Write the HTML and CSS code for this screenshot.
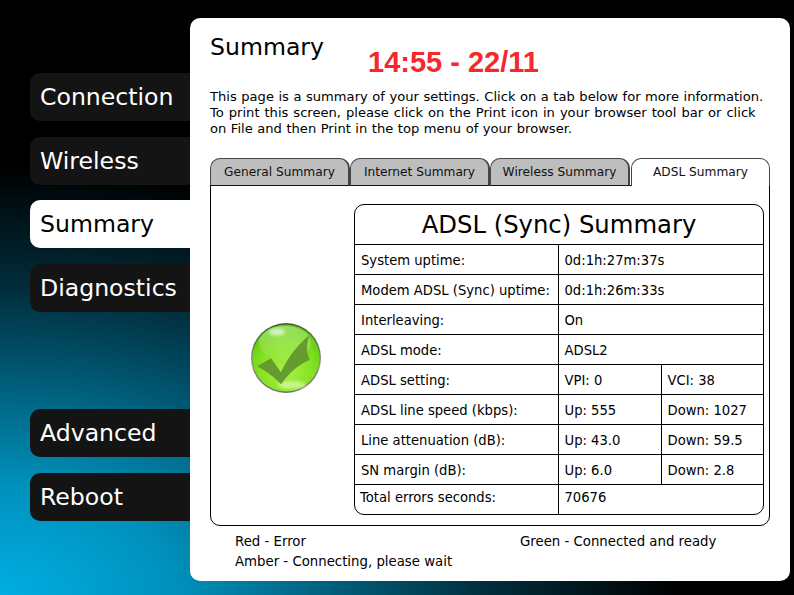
FILE: index.html
```html
<!DOCTYPE html>
<html lang="en">
<head>
<meta charset="utf-8">
<title>Summary</title>
<link rel="stylesheet" href="styles.css">
</head>
<body>
<div class="page">
  <nav class="nav">
    <div class="nav-group">
      <a class="nav-item">Connection</a>
      <a class="nav-item">Wireless</a>
      <a class="nav-item active">Summary</a>
      <a class="nav-item">Diagnostics</a>
    </div>
    <div class="nav-group">
      <a class="nav-item">Advanced</a>
      <a class="nav-item">Reboot</a>
    </div>
  </nav>
  <main class="panel">
    <div class="head">
      <h1 class="title">Summary</h1>
      <div class="clock">14:55 - 22/11</div>
    </div>
    <p class="intro"><span class="line">This page is a summary of your settings. Click on a tab below for more information.</span><span class="line wide">To print this screen, please click on the Print icon in your browser tool bar or click</span><span class="line">on File and then Print in the top menu of your browser.</span></p>
    <div class="tabs">
      <div class="tab">General Summary</div>
      <div class="tab">Internet Summary</div>
      <div class="tab">Wireless Summary</div>
      <div class="tab current">ADSL Summary</div>
    </div>
    <section class="tabbody">
      <div class="status">
        <svg class="check" width="72" height="72" viewBox="0 0 72 72" aria-hidden="true">
          <defs>
            <radialGradient id="ball" cx="50%" cy="70%" r="65%">
              <stop offset="0" stop-color="#a8f04a"/>
              <stop offset="0.6" stop-color="#86e222"/>
              <stop offset="1" stop-color="#62cc10"/>
            </radialGradient>
            <linearGradient id="rim" x1="0" y1="0" x2="0" y2="1">
              <stop offset="0" stop-color="#3c5a30"/>
              <stop offset="0.6" stop-color="#8a9a80"/>
              <stop offset="1" stop-color="#6a6a62"/>
            </linearGradient>
            <linearGradient id="gloss" x1="0" y1="0" x2="0" y2="1">
              <stop offset="0" stop-color="#fff" stop-opacity="0.35"/>
              <stop offset="1" stop-color="#fff" stop-opacity="0.05"/>
            </linearGradient>
            <filter id="soft" x="-30%" y="-30%" width="160%" height="160%">
              <feGaussianBlur stdDeviation="1.4"/>
            </filter>
          </defs>
          <circle cx="36" cy="36" r="35" fill="url(#rim)"/>
          <circle cx="36" cy="36" r="33.6" fill="url(#ball)"/>
          <ellipse cx="35" cy="21" rx="26" ry="17" fill="url(#gloss)"/>
          <ellipse cx="27" cy="10" rx="8" ry="3.6" fill="#fff" opacity="0.6" filter="url(#soft)"/>
          <ellipse cx="42" cy="63" rx="14" ry="4" fill="#dcfcaa" opacity="0.7" filter="url(#soft)"/>
          <path d="M7.7 44.3 L21 36.7 L31 51 C38 36 47 24 58.7 14.3 C56 22 55.5 30 59.3 37.7 C48 42 38 52 31 61.7 C25 55 15 48 7.7 44.3 Z" fill="#659c30" stroke="#588c28" stroke-width="0.6"/>
        </svg>
      </div>
      <div class="sync">
        <table class="grid">
          <colgroup><col class="c1"><col class="c2"><col class="c3"></colgroup>
          <tr><th colspan="3">ADSL (Sync) Summary</th></tr>
          <tr><td>System uptime:</td><td colspan="2">0d:1h:27m:37s</td></tr>
          <tr><td>Modem ADSL (Sync) uptime:</td><td colspan="2">0d:1h:26m:33s</td></tr>
          <tr><td>Interleaving:</td><td colspan="2">On</td></tr>
          <tr><td>ADSL mode:</td><td colspan="2">ADSL2</td></tr>
          <tr><td>ADSL setting:</td><td>VPI: 0</td><td>VCI: 38</td></tr>
          <tr><td>ADSL line speed (kbps):</td><td>Up: 555</td><td>Down: 1027</td></tr>
          <tr><td>Line attenuation (dB):</td><td>Up: 43.0</td><td>Down: 59.5</td></tr>
          <tr><td>SN margin (dB):</td><td>Up: 6.0</td><td>Down: 2.8</td></tr>
          <tr class="total"><td>Total errors seconds:</td><td colspan="2">70676</td></tr>
        </table>
      </div>
    </section>
    <div class="legend">
      <span>Red - Error</span>
      <span>Green - Connected and ready</span>
      <span>Amber - Connecting, please wait</span>
    </div>
  </main>
</div>
</body>
</html>
```
FILE: styles.css
```css
* { box-sizing: border-box; }
html, body { margin: 0; height: 100%; }
body {
  width: 794px;
  height: 595px;
  overflow: hidden;
  font-family: "DejaVu Sans", Verdana, sans-serif;
  color: #000;
  background: radial-gradient(ellipse 680px 430px at 0 100%, #00aee2 0%, #0092be 25%, #005c78 50%, #012c3a 72%, #000 100%);
}
.page {
  display: flex;
  align-items: flex-start;
  padding: 18px 4px 0 30px;
  height: 100%;
}
.nav {
  width: 160px;
  padding-top: 55px;
  display: flex;
  flex-direction: column;
  gap: 97.5px;
}
.nav-group {
  display: flex;
  flex-direction: column;
  gap: 15.5px;
}
.nav-item {
  display: flex;
  align-items: center;
  height: 48px;
  padding-left: 10px;
  background: #141414;
  color: #fff;
  font-size: 23.6px;
  border-radius: 10px 0 0 10px;
}
.nav-item.active { background: #fff; color: #000; }
.panel {
  width: 600px;
  height: 563px;
  background: #fff;
  border-radius: 10px;
  padding: 0 20px;
}
.head {
  display: flex;
  height: 65px;
}
.title {
  margin: 14px 0 0;
  width: 158px;
  font-size: 23.6px;
  font-weight: 400;
  line-height: 30px;
}
.clock {
  margin-top: 27px;
  font-family: "Liberation Sans", Arial, sans-serif;
  font-weight: 700;
  font-size: 29px;
  line-height: 34px;
  color: #f5282d;
}
.intro {
  margin: 6px 0 0;
  height: 69px;
  font-size: 13.1px;
  line-height: 16px;
  word-spacing: 0.35px;
}
.line { display: block; white-space: nowrap; }
.line.wide { word-spacing: 0.8px; }
.tabs {
  display: flex;
  height: 28px;
}
.tab {
  width: 140px;
  border: 1px solid #444;
  border-bottom: 1px solid #111;
  border-right-width: 2px;
  border-radius: 10px 10px 0 0;
  background: #bebebe;
  font-size: 12.2px;
  line-height: 26px;
  text-align: center;
  color: #111;
}
.tab.current {
  background: #fff;
  border-right-width: 1px;
  border-bottom: 0;
  margin-left: 1px;
  position: relative;
  z-index: 1;
  width: 139px;
  height: 28px;
}
.tabbody {
  margin-top: -1px;
  height: 341px;
  border: 1px solid #000;
  border-radius: 0 0 10px 10px;
  display: flex;
  padding: 18px 5px 0 0;
}
.status {
  width: 143px;
  height: 310px;
  display: flex;
  align-items: center;
  justify-content: center;
  padding-left: 7px;
  padding-bottom: 3px;
}
.check { display: block; }
.sync {
  width: 410px;
  height: 311px;
  border: 1px solid #000;
  border-radius: 10px;
  overflow: hidden;
}
.grid {
  width: 408px;
  table-layout: fixed;
  border-collapse: collapse;
  font-size: 13.17px;
}
.c1 { width: 203px; }
.c2 { width: 103px; }
.c3 { width: 102px; }
.grid th {
  height: 39px;
  font-size: 24.3px;
  font-weight: 400;
  text-align: center;
  padding: 1px 0 0;
}
.grid td {
  height: 30px;
  padding: 2px 0 0 6px;
  border: 1px solid #000;
  white-space: nowrap;
}
.grid tr:first-child th { border-bottom: 1px solid #000; }
.grid tr td:first-child { border-left: 0; }
.grid tr td:last-child { border-right: 0; }
.grid tr:last-child td { border-bottom: 0; }
.grid .total td { padding: 0 0 4px 6px; }
.grid .total td:first-child { padding-left: 5px; }
.legend {
  display: grid;
  grid-template-columns: 285px auto;
  row-gap: 4px;
  padding: 8px 0 0 25px;
  font-size: 13.3px;
  line-height: 16px;
}
```
